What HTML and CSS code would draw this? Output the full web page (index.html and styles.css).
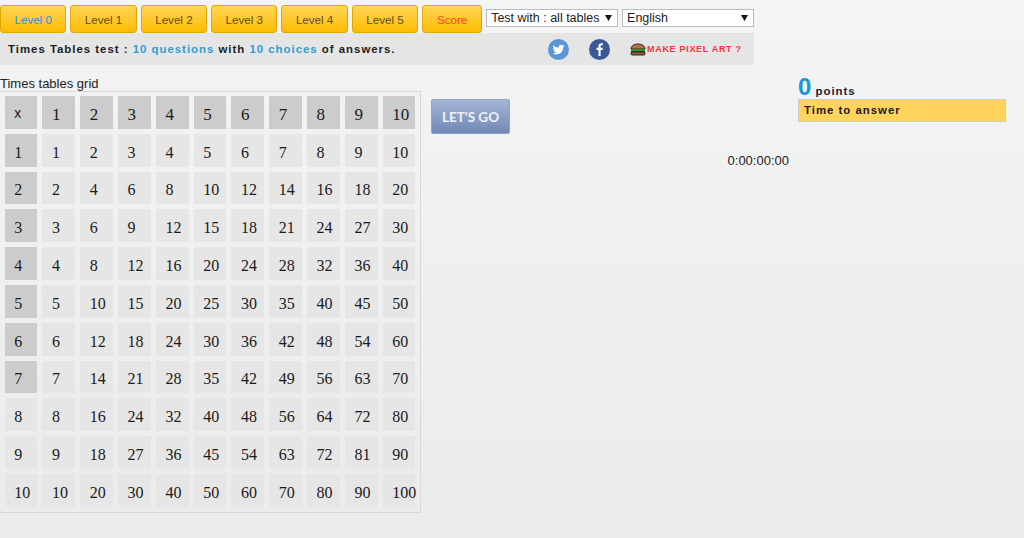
FILE: index.html
```html
<!DOCTYPE html>
<html lang="en">
<head>
  <meta charset="UTF-8">
  <title>Times Tables test</title>
  <link rel="stylesheet" href="styles.css">
</head>
<body>
  <!-- top row: levels and selects -->
  <div class="toolbar">
    <button class="level current">Level 0</button>
    <button class="level">Level 1</button>
    <button class="level">Level 2</button>
    <button class="level">Level 3</button>
    <button class="level">Level 4</button>
    <button class="level">Level 5</button>
    <button class="level score">Score</button>
    <select class="pick pick-test"><option>Test with : all tables</option></select>
    <select class="pick pick-lang"><option>English</option></select>
  </div>

  <!-- info bar -->
  <div class="info">
    <p class="info-text">Times Tables test : <span class="blue">10 questions</span> with <span class="blue">10 choices</span> of answers.</p>
    <svg class="social social-tw" viewBox="0 0 24 24" width="21" height="21">
      <circle cx="12" cy="12" r="12" fill="#5b95d3"/>
      <path fill="#fff" d="M19 7.900c-.5.2-1.100.4-1.600.5.6-.4 1-.9 1.200-1.600-.5.3-1.100.6-1.800.7-.5-.6-1.200-.9-2-.9-1.500 0-2.800 1.300-2.800 2.800 0 .2 0 .4.100.6-2.300-.1-4.400-1.200-5.800-2.900-.2.4-.4.9-.4 1.400 0 1 .5 1.800 1.200 2.300-.5 0-.9-.1-1.300-.3 0 1.400 1 2.500 2.300 2.800-.2.100-.5.100-.7.100-.2 0-.4 0-.5-.1.400 1.100 1.400 1.900 2.600 2-1 .8-2.200 1.200-3.500 1.200H5c1.200.8 2.700 1.300 4.300 1.300 5.200 0 8-4.300 8-8v-.4c.7-.4 1.200-.9 1.700-1.500z"/>
    </svg>
    <svg class="social social-fb" viewBox="0 0 24 24" width="21" height="21">
      <circle cx="12" cy="12" r="12" fill="#3b5998"/>
      <path fill="#fff" d="M13.300 19.500v-6.800h2.200l.3-2.600h-2.500V8.500c0-.8.200-1.300 1.300-1.300h1.300V4.900c-.3 0-1-.1-1.900-.1-1.900 0-3.200 1.200-3.200 3.300v2H8.600v2.600h2.200v6.800z"/>
    </svg>
    <a class="pixel-link">
      <svg class="burger" viewBox="0 0 16 13" width="16" height="13">
        <path fill="#b5714a" stroke="#3a2a20" stroke-width="1" d="M1 6c0-3 3-5 7-5s7 2 7 5z"/>
        <rect x="1" y="6" width="14" height="2" fill="#1f9a2b"/>
        <rect x="1" y="8" width="14" height="1" fill="#5a2d16"/>
        <rect x="1" y="9" width="14" height="3" rx="1" fill="#8a5a3a" stroke="#3a2a20" stroke-width="1"/>
      </svg>
      <span>MAKE PIXEL ART ?</span>
    </a>
  </div>

  <div class="main">
    <!-- grid -->
    <div class="left">
      <div class="grid-title">Times tables grid</div>
      <div class="grid">
        <div class="cell head small">x</div><div class="cell head big">1</div><div class="cell head big">2</div><div class="cell head big">3</div><div class="cell head big">4</div><div class="cell head big">5</div><div class="cell head big">6</div><div class="cell head big">7</div><div class="cell head big">8</div><div class="cell head big">9</div><div class="cell head big">10</div>
        <div class="cell head">1</div><div class="cell">1</div><div class="cell">2</div><div class="cell">3</div><div class="cell">4</div><div class="cell">5</div><div class="cell">6</div><div class="cell">7</div><div class="cell">8</div><div class="cell">9</div><div class="cell">10</div>
        <div class="cell head">2</div><div class="cell">2</div><div class="cell">4</div><div class="cell">6</div><div class="cell">8</div><div class="cell">10</div><div class="cell">12</div><div class="cell">14</div><div class="cell">16</div><div class="cell">18</div><div class="cell">20</div>
        <div class="cell head">3</div><div class="cell">3</div><div class="cell">6</div><div class="cell">9</div><div class="cell">12</div><div class="cell">15</div><div class="cell">18</div><div class="cell">21</div><div class="cell">24</div><div class="cell">27</div><div class="cell">30</div>
        <div class="cell head">4</div><div class="cell">4</div><div class="cell">8</div><div class="cell">12</div><div class="cell">16</div><div class="cell">20</div><div class="cell">24</div><div class="cell">28</div><div class="cell">32</div><div class="cell">36</div><div class="cell">40</div>
        <div class="cell head">5</div><div class="cell">5</div><div class="cell">10</div><div class="cell">15</div><div class="cell">20</div><div class="cell">25</div><div class="cell">30</div><div class="cell">35</div><div class="cell">40</div><div class="cell">45</div><div class="cell">50</div>
        <div class="cell head">6</div><div class="cell">6</div><div class="cell">12</div><div class="cell">18</div><div class="cell">24</div><div class="cell">30</div><div class="cell">36</div><div class="cell">42</div><div class="cell">48</div><div class="cell">54</div><div class="cell">60</div>
        <div class="cell head">7</div><div class="cell">7</div><div class="cell">14</div><div class="cell">21</div><div class="cell">28</div><div class="cell">35</div><div class="cell">42</div><div class="cell">49</div><div class="cell">56</div><div class="cell">63</div><div class="cell">70</div>
        <div class="cell">8</div><div class="cell">8</div><div class="cell">16</div><div class="cell">24</div><div class="cell">32</div><div class="cell">40</div><div class="cell">48</div><div class="cell">56</div><div class="cell">64</div><div class="cell">72</div><div class="cell">80</div>
        <div class="cell">9</div><div class="cell">9</div><div class="cell">18</div><div class="cell">27</div><div class="cell">36</div><div class="cell">45</div><div class="cell">54</div><div class="cell">63</div><div class="cell">72</div><div class="cell">81</div><div class="cell">90</div>
        <div class="cell">10</div><div class="cell">10</div><div class="cell">20</div><div class="cell">30</div><div class="cell">40</div><div class="cell">50</div><div class="cell">60</div><div class="cell">70</div><div class="cell">80</div><div class="cell">90</div><div class="cell">100</div>
      </div>
    </div>

    <!-- start button and timer -->
    <div class="middle">
      <button class="go">LET'S GO</button>
      <div class="timer">0:00:00:00</div>
    </div>

    <!-- score -->
    <div class="right">
      <div class="points"><span class="points-num">0</span> points</div>
      <div class="time-bar">Time to answer</div>
    </div>
  </div>
</body>
</html>
```

FILE: styles.css
```css
html {
  height: 100%;
}

body {
  margin: 0;
  height: 538px;
  overflow: hidden;
  font-family: "Liberation Sans", Arial, sans-serif;
  color: #222;
  background: linear-gradient(#f3f4f4, #ebebeb);
}

/* ===== Top row ===== */
.toolbar {
  display: flex;
  align-items: flex-start;
  gap: 4px;
  width: 754px;
  height: 28px;
  padding-top: 5px;
}

.level {
  width: 66.4px;
  height: 28px;
  padding: 0;
  border: 1px solid #e0a800;
  border-radius: 3px;
  background: linear-gradient(#ffd659, #ffbb00);
  font-family: inherit;
  font-size: 11.6px;
  color: #5c5020;
}

.level.current {
  color: #2199d8;
}

.level.score {
  width: 60px;
  color: #f5452c;
}

.pick {
  appearance: none;
  width: 132px;
  height: 18px;
  margin-top: 4px;
  padding: 0 0 0 4px;
  border: 1px solid #bbb;
  border-radius: 0;
  background: #fff url("data:image/svg+xml,%3Csvg xmlns='http://www.w3.org/2000/svg' width='7' height='6'%3E%3Cpath d='M0 0h7L3.500 6z' fill='%23111'/%3E%3C/svg%3E") no-repeat right 5px center;
  font-family: inherit;
  font-size: 12.5px;
  color: #222;
}

/* ===== Info bar ===== */
.info {
  display: flex;
  align-items: center;
  width: 754px;
  height: 32px;
  background: #e5e5e5;
}

.info-text {
  width: 540px;
  margin: 0 0 0 8px;
  font-size: 11.4px;
  font-weight: bold;
  letter-spacing: 1px;
  white-space: nowrap;
  color: #1c1c24;
}

.blue {
  color: #2b9ed8;
}

.social-fb {
  margin-left: 20px;
}

.pixel-link {
  display: flex;
  align-items: center;
  gap: 1px;
  margin-left: 20px;
  font-size: 9px;
  font-weight: bold;
  letter-spacing: 0.7px;
  white-space: nowrap;
  color: #f5333c;
}

/* ===== Main ===== */
.main {
  display: flex;
}

.left {
  width: 421px;
  margin-top: 11px;
}

.grid-title {
  height: 15px;
  font-size: 13px;
  line-height: 15px;
}

.grid {
  display: grid;
  grid-template-columns: repeat(11, minmax(0, 1fr));
  grid-auto-rows: 32.8px;
  gap: 5px;
  width: 410.8px;
  height: 412px;
  padding: 4px 4.5px 4px 4.7px;
  border: 1px solid #d8d8d8;
  border-left: 0;
}

.cell {
  display: flex;
  align-items: center;
  box-sizing: border-box;
  padding: 5px 0 0 9.5px;
  background: #e6e6e6;
  font-family: "Liberation Serif", "Times New Roman", serif;
  font-size: 16px;
  color: #1a1a1a;
}

.cell.head {
  background: #cccccc;
}

.cell.big {
  font-size: 17px;
}

.cell.small {
  padding-top: 2px;
  font-family: "Liberation Sans", Arial, sans-serif;
  font-size: 14px;
}

/* ===== Middle ===== */
.middle {
  display: flex;
  flex-direction: column;
  align-items: flex-start;
  width: 358px;
  margin-left: 10px;
  padding-top: 34px;
}

.go {
  width: 79px;
  height: 35px;
  padding: 0;
  border: 1px solid #8fa5cc;
  border-radius: 2px;
  background: linear-gradient(#a3b5d6, #7189b5);
  font-family: "Lato", sans-serif;
  font-size: 13.5px;
  font-weight: bold;
  color: #eef2f8;
}

.timer {
  align-self: flex-end;
  margin-top: 19px;
  font-size: 13px;
  line-height: 15px;
}

/* ===== Right ===== */
.right {
  width: 208px;
  margin-left: 9px;
  padding-top: 10px;
}

.points {
  height: 24px;
  line-height: 24px;
  font-size: 11.4px;
  font-weight: bold;
  letter-spacing: 1px;
  color: #1c1c30;
}

.points-num {
  font-size: 24px;
  letter-spacing: 0;
  color: #1a96d2;
}

.time-bar {
  height: 21px;
  line-height: 21px;
  padding-left: 5px;
  border: 1px solid #ccc;
  background: #ffd35c;
  font-size: 11.4px;
  font-weight: bold;
  letter-spacing: 1px;
  color: #1c1c24;
}
```
